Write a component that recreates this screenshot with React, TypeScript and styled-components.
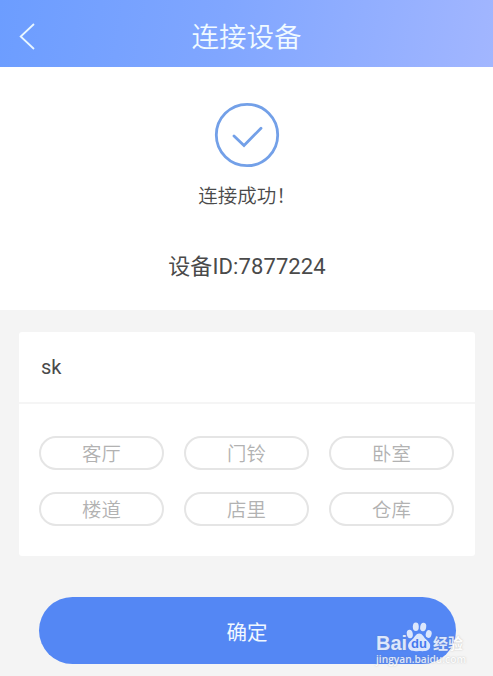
import React from "react";
import styled, { createGlobalStyle } from "styled-components";

const GlobalStyle = createGlobalStyle`
  * { box-sizing: border-box; }
  body {
    margin: 0;
    background: #f4f4f4;
    font-family: Roboto, "Noto Sans CJK SC", sans-serif;
    color: #4a4a4a;
  }
  button { font-family: inherit; padding: 0; }
`;

const Screen = styled.div`
  position: relative;
  width: 493px;
  height: 676px;
  overflow: hidden;
  background: #f4f4f4;
`;

const Header = styled.header`
  display: grid;
  grid-template-columns: 60px 1fr 60px;
  align-items: center;
  height: 67px;
  padding-top: 6px;
  background: linear-gradient(100deg, #6c9dff 0%, #80a6ff 45%, #a2b6ff 100%);
`;

const BackButton = styled.button`
  display: flex;
  align-items: center;
  height: 32px;
  padding-left: 19px;
  border: 0;
  background: none;
  color: #e9f7ff;
`;

const Title = styled.h1`
  margin: 0;
  padding-top: 2px;
  font-size: 27.5px;
  font-weight: 350;
  line-height: 40px;
  text-align: center;
  color: #f0faff;
`;

const StatusPanel = styled.section`
  display: flex;
  flex-direction: column;
  align-items: center;
  height: 243px;
  padding-top: 35px;
  background: #fff;
`;

const StatusText = styled.p`
  margin: 15px 0 0;
  padding-left: 1px;
  font-size: 19.5px;
  font-weight: 350;
  line-height: 28px;
`;

const DeviceId = styled.p`
  margin: 40px 0 0;
  padding-left: 1px;
  font-size: 22px;
  line-height: 32px;
  letter-spacing: 0.1px;
`;

const Panel = styled.main`
  padding-top: 1px;
`;

const Card = styled.section`
  width: 456px;
  margin: 21px 0 0 19px;
  border-radius: 3px;
  background: #fff;
`;

const NameField = styled.div`
  display: flex;
  align-items: center;
  height: 72px;
  padding-left: 22px;
  border-bottom: 2px solid #f5f5f5;
  font-size: 20px;
`;

const Choices = styled.div`
  display: grid;
  grid-template-columns: repeat(3, 125px);
  grid-auto-rows: 34px;
  gap: 21.5px 20px;
  height: 152px;
  padding: 32px 20px 0;
`;

const Choice = styled.button`
  display: flex;
  align-items: center;
  justify-content: center;
  padding-top: 4px;
  border: 2px solid #e5e5e5;
  border-radius: 17px;
  background: #fff;
  color: #b2b2b2;
  font-size: 19.4px;
  font-weight: 350;
  line-height: 28px;
`;

const ConfirmButton = styled.button`
  display: flex;
  align-items: center;
  justify-content: center;
  width: 417px;
  height: 67px;
  margin: 41px 0 0 38.5px;
  border: 0;
  border-radius: 34px;
  background: #5487f4;
  color: #f0f8ff;
  font-size: 20.5px;
`;

const Watermark = styled.div`
  position: absolute;
  left: 376px;
  top: 621px;
  width: 92px;
  opacity: 0.8;
  color: #fff;
  text-shadow: 0 0 1.5px rgba(120, 120, 120, 0.55);
`;

const Brand = styled.div`
  display: flex;
  align-items: flex-end;
  height: 31px;
`;

const Latin = styled.span`
  width: 30px;
  font: 700 20px/18px "Liberation Sans", sans-serif;
`;

const Chinese = styled.span`
  margin-left: 1px;
  font: 700 15px/18px "Noto Sans CJK SC", sans-serif;
  white-space: nowrap;
`;

const PawBox = styled.span`
  display: grid;
  place-items: center;
  width: 26px;
  height: 31px;

  svg, span { grid-area: 1 / 1; }
  span {
    padding-top: 14px;
    color: #3f76ee;
    font: 700 13px/16px "Liberation Sans", sans-serif;
    text-shadow: none;
  }
`;

const Address = styled.div`
  padding-top: 1px;
  font: 600 10.2px/12px "Open Sans", sans-serif;
  white-space: nowrap;
`;

const choices = ["客厅", "门铃", "卧室", "楼道", "店里", "仓库"];

export default function App() {
  return (
    <Screen>
      <GlobalStyle />
      <Header>
        <BackButton aria-label="返回">
          <svg width="17" height="28" viewBox="0 0 17 28" fill="none" stroke="currentColor" strokeWidth="1.8">
            <path d="M15 1 1.7 13.5 15 26" />
          </svg>
        </BackButton>
        <Title>连接设备</Title>
      </Header>
      <StatusPanel>
        <svg width="66" height="66" viewBox="0 0 66 66" fill="none" stroke="#73a0e8" strokeWidth="2.8">
          <circle cx="33" cy="33" r="30.7" />
          <path d="m20 34 10 9.5 17-17.2" strokeLinecap="round" strokeLinejoin="miter" />
        </svg>
        <StatusText>连接成功！</StatusText>
        <DeviceId>设备ID:7877224</DeviceId>
      </StatusPanel>
      <Panel>
        <Card>
          <NameField>sk</NameField>
          <Choices>
            {choices.map((name) => (
              <Choice key={name}>{name}</Choice>
            ))}
          </Choices>
        </Card>
        <ConfirmButton>确定</ConfirmButton>
      </Panel>
      <Watermark>
        <Brand>
          <Latin>Bai</Latin>
          <PawBox>
            <svg width="26" height="31" viewBox="0 0 26 31" fill="#fff">
              <ellipse cx="3.8" cy="13" rx="3" ry="4.2" transform="rotate(-10 3.8 13)" />
              <ellipse cx="9.8" cy="5.8" rx="3" ry="4.3" />
              <ellipse cx="17.2" cy="6" rx="3" ry="4.3" transform="rotate(10 17.2 6)" />
              <ellipse cx="22.7" cy="13" rx="2.9" ry="4" transform="rotate(15 22.7 13)" />
              <path d="M13.2 12.5c3.2 0 4.3 3.4 6.5 5.6 3 3 5.2 4.6 4.3 8.2-.8 3.7-5 4.2-10.8 3.7-6 .6-10.1-.1-10.9-3.7-.8-3.7 1.5-5.4 4.4-8.2 2.3-2.2 3.2-5.6 6.5-5.6Z" />
            </svg>
            <span>du</span>
          </PawBox>
          <Chinese>经验</Chinese>
        </Brand>
        <Address>jingyan.baidu.com</Address>
      </Watermark>
    </Screen>
  );
}
